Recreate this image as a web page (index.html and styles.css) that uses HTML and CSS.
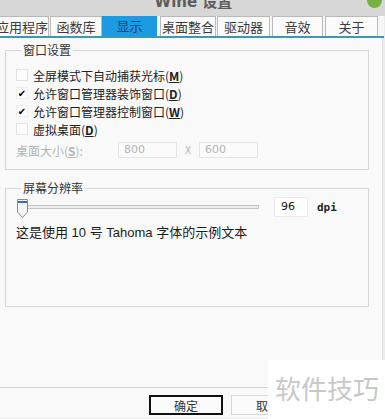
FILE: index.html
```html
<!DOCTYPE html>
<html>
<head>
	<meta charset="utf-8">
	<title>Wine 设置</title>
	<link rel="stylesheet" href="styles.css">
</head>
<body>
	<div class="window">
		<div class="titlebar">
			<div class="title">Wine 设置</div>
			<span class="close"></span>
		</div>
		<div class="tabs">
			<div class="tab first">应用程序</div>
			<div class="tab t2">函数库</div>
			<div class="tab t3 active">显示</div>
			<div class="tab t4">桌面整合</div>
			<div class="tab t5">驱动器</div>
			<div class="tab t6">音效</div>
			<div class="tab t7">关于</div>
		</div>
		<div class="panel">
			<fieldset class="group group_window">
				<legend>窗口设置</legend>
				<div class="check_row"><span class="box"></span>全屏模式下自动捕获光标(<u>M</u>)</div>
				<div class="check_row"><span class="box checked">✔</span>允许窗口管理器装饰窗口(<u>D</u>)</div>
				<div class="check_row"><span class="box checked">✔</span>允许窗口管理器控制窗口(<u>W</u>)</div>
				<div class="check_row"><span class="box"></span>虚拟桌面(<u>D</u>)</div>
				<div class="size_row">
					<span class="size_label">桌面大小(<u>S</u>):</span>
					<span class="field">800</span>
					<span class="times">X</span>
					<span class="field">600</span>
				</div>
			</fieldset>
			<fieldset class="group group_dpi">
				<legend>屏幕分辨率</legend>
				<div class="slider_row">
					<div class="slider">
						<div class="track"></div>
						<svg class="thumb" width="12" height="19" viewBox="0 0 12 19">
							<path d="M0.5,0.5 H10.5 V13 L5.5,18.5 L0.5,13 Z" fill="#f4f4f4" stroke="#8c8c8c"/>
							<rect x="1" y="2" width="9" height="2" fill="#2f6fc0"/>
						</svg>
					</div>
					<span class="dpi_field">96</span>
					<span class="dpi">dpi</span>
				</div>
				<div class="sample">这是使用 10 号 Tahoma 字体的示例文本</div>
			</fieldset>
		</div>
		<div class="footer">
			<button class="btn default">确定</button>
			<button class="btn">取消</button>
		</div>
		<div class="watermark">软件技巧</div>
	</div>
</body>
</html>
```
FILE: styles.css
```css
body{
	margin: 0;
	background-color: #ececec;
	font-family: "Noto Sans CJK SC", "DejaVu Sans", sans-serif;
}
.window{
	width: 385px;
	height: 419px;
	overflow: hidden;
	position: relative;
	background-color: #ececec;
}
.titlebar{
	height: 16px;
	overflow: hidden;
	background-color: #d7d7d7;
	position: relative;
}
.title{
	margin-top: -9px;
	line-height: 22px;
	text-align: center;
	padding-left: 2px;
	font-family: "DejaVu Sans", "Noto Sans CJK SC", sans-serif;
	font-size: 15px;
	font-weight: bold;
	color: #5c5c5c;
}
.close{
	position: absolute;
	left: 367px;
	top: -7px;
	width: 15px;
	height: 15px;
	border-radius: 50%;
	background-color: #76b043;
}
.tabs{
	display: flex;
	height: 20px;
	width: 384px;
	background-color: #f6f6f6;
	border-bottom: #3d9aac 2px solid;
}
.tab{
	box-sizing: border-box;
	height: 20px;
	border: #b9b9b9 1px solid;
	border-bottom: none;
	background-color: #fbfbfb;
	font-size: 13px;
	line-height: 19px;
	text-align: center;
	color: #3a3a3a;
}
.tab.first{ width: 54px; margin-left: -5px; }
.t2{ width: 52px; margin-left: 1px; }
.t3{ width: 55px; }
.t4{ width: 56px; margin-left: 3px; }
.t5{ width: 53px; margin-left: 1px; }
.t6{ width: 51px; margin-left: 2px; }
.t7{ width: 53px; margin-left: 2px; }
.tab.active{
	background-color: #1c9be3;
	border: none;
	color: #1d3f7a;
}
.panel{
	width: 383px;
	height: 350px;
	box-sizing: border-box;
	padding: 6px 0 0 5px;
	background-color: #f9f9f9;
	border-right: #dedede 1px solid;
	border-bottom: #d4d4d4 1px solid;
}
.group{
	width: 364px;
	box-sizing: border-box;
	margin: 0;
	border: #d6d6d6 1px solid;
	padding: 10px 10px 11px 10px;
	font-size: 12px;
	color: #222;
}
.group legend{
	padding: 0 2px;
	margin-left: 5px;
	line-height: 12px;
	font-size: 12px;
	color: #333;
}
.check_row{
	display: flex;
	align-items: center;
	height: 18px;
	font-size: 12px;
}
.check_row u, .size_label u{
	font-weight: bold;
}
.box{
	box-sizing: border-box;
	width: 12px;
	height: 12px;
	margin-right: 5px;
	border: #e2e2e2 1px solid;
	background-color: #fdfdfd;
	font-size: 10px;
	line-height: 10px;
	text-align: center;
	color: #000;
}
.box.checked{
	border-color: #f0f0f0;
}
.size_row{
	display: flex;
	align-items: center;
	height: 16px;
	margin-top: 4px;
	color: #b4b4b4;
}
.size_label{
	width: 102px;
}
.field{
	box-sizing: border-box;
	width: 59px;
	height: 16px;
	border: #e4e4e4 1px solid;
	background-color: #fbfbfb;
	padding-left: 5px;
	font-family: "DejaVu Sans", sans-serif;
	font-size: 11px;
	line-height: 14px;
	color: #b4b4b4;
}
.times{
	width: 22px;
	text-align: center;
	font-family: "DejaVu Sans Mono", monospace;
	font-size: 10px;
}
.group_dpi{
	margin-top: 12px;
	padding-top: 2px;
	padding-bottom: 65px;
}
.slider_row{
	display: flex;
	align-items: center;
	height: 22px;
}
.slider{
	position: relative;
	width: 242px;
	height: 22px;
	margin-left: 1px;
}
.track{
	position: absolute;
	left: 0;
	right: 0;
	top: 9px;
	height: 2px;
	border: #c4c4c4 1px solid;
	background-color: #ededed;
}
.thumb{
	position: absolute;
	left: 0;
	top: 3px;
}
.dpi_field{
	box-sizing: border-box;
	width: 34px;
	height: 20px;
	margin-left: 15px;
	border: #ececec 1px solid;
	background-color: #fff;
	padding-left: 6px;
	font-family: "DejaVu Sans", sans-serif;
	font-size: 11px;
	line-height: 18px;
	color: #111;
}
.dpi{
	margin-left: 9px;
	font-family: "DejaVu Sans Mono", monospace;
	font-size: 11px;
	font-weight: bold;
	color: #222;
}
.sample{
	margin-top: 7px;
	line-height: 16px;
	font-family: "Liberation Sans", "Noto Sans CJK SC", sans-serif;
	font-size: 13px;
	color: #1a1a1a;
}
.footer{
	display: flex;
	gap: 8px;
	padding: 7px 0 0 149px;
	height: 30px;
	box-sizing: border-box;
	background-color: #f9f9f9;
}
.btn{
	width: 74px;
	height: 20px;
	box-sizing: border-box;
	border: #d8d8d8 1px solid;
	background-color: #fbfbfb;
	font-family: "Noto Sans CJK SC", sans-serif;
	font-size: 12px;
	color: #333;
	padding: 0;
}
.btn.default{
	border: #111 2px solid;
}
.watermark{
	position: absolute;
	left: 268px;
	top: 360px;
	width: 117px;
	height: 59px;
	background-color: #fff;
	padding-left: 7px;
	box-sizing: border-box;
	font-size: 26px;
	line-height: 56px;
	color: #c8c8c8;
}
```
